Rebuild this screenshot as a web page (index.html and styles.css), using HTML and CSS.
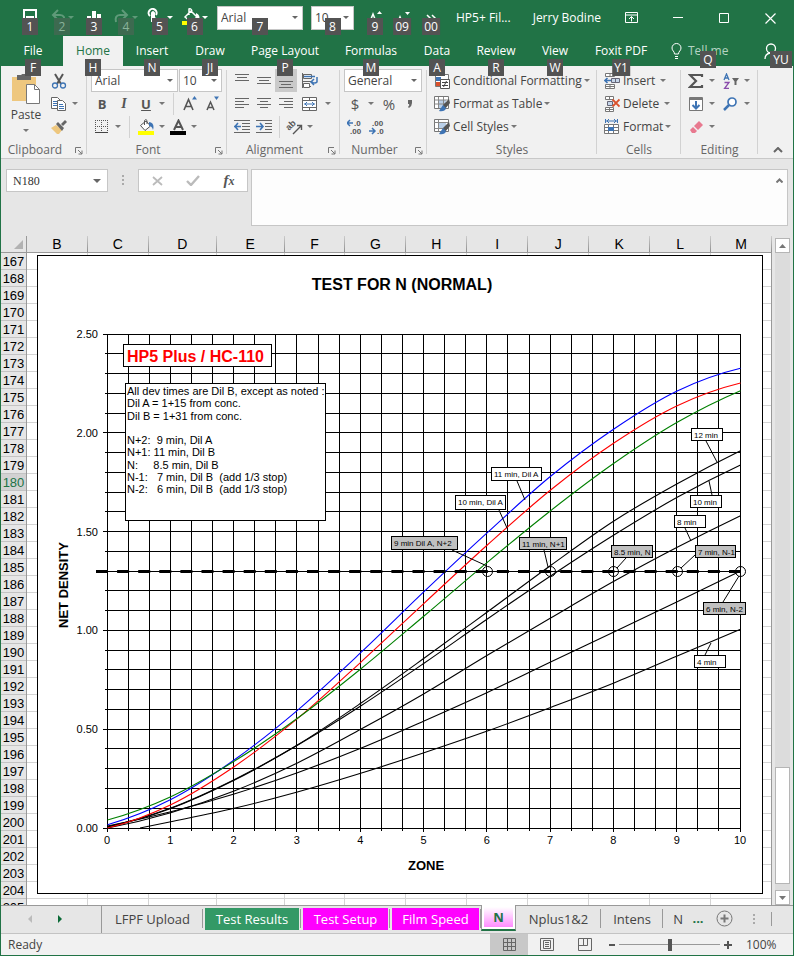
FILE: index.html
```html
<!DOCTYPE html>
<html lang="en">
<head>
<meta charset="utf-8">
<meta name="viewport" content="width=device-width, initial-scale=1">
<title>HP5+ Film test</title>
<link rel="stylesheet" href="styles.css">
</head>
<body>
<div class="window">
  <header class="titlebar">
    <div class="qat">
      <button class="qa" aria-label="Save"><svg width="16" height="16"><path d="M2 1h12v14H2zM4 8h8" fill="none" stroke="#fff" stroke-width="2"/></svg><span class="tip">1</span></button>
      <button class="qa dim" aria-label="Undo"><svg width="24" height="16"><path d="M8 1 3 6l5 5M3 6h7c4 0 5 3 4 7" fill="none" stroke="#5f9a79" stroke-width="2"/><path d="M18 7h6l-3 3z" fill="#5f9a79"/></svg><span class="tip">2</span></button>
      <button class="qa" aria-label="Chart"><svg width="16" height="16"><path d="M1 7h4v9H1zM6 2h4v14H6zM11 5h4v11h-4z" fill="#fff"/></svg><span class="tip">3</span></button>
      <button class="qa dim" aria-label="Redo"><svg width="24" height="16"><path d="M8 1l5 5-5 5M13 6H6c-4 0-5 3-4 7" fill="none" stroke="#5f9a79" stroke-width="2"/><path d="M18 7h6l-3 3z" fill="#5f9a79"/></svg><span class="tip">4</span></button>
      <button class="qa wide" aria-label="Touch mode"><svg width="26" height="18"><path d="M3 8A4 4 0 1 1 9 7M5 14V5q1-2 2 0v5l4 2v5" fill="none" stroke="#fff" stroke-width="2"/><path d="M20 8h6l-3 3z" fill="#fff"/></svg><span class="tip">5</span></button>
      <button class="qa wide" aria-label="Fill color"><svg width="26" height="18"><path d="M3 9 9 3l6 6-6 5zM7 7V1q2-1 3 2" fill="none" stroke="#fff" stroke-width="1.500"/><path d="M14 5q5 2 3 8-2-2-3-3z" fill="#fff"/><path d="M0 13h15v4H0z" fill="#ff0"/><path d="M20 8h6l-3 3z" fill="#fff"/></svg><span class="tip">6</span></button>
      <span class="combo qfont"><select aria-label="Quick font"><option>Arial</option></select><span class="tip">7</span></span>
      <span class="combo qsize"><select aria-label="Quick font size"><option>10</option></select><span class="tip">8</span></span>
      <button class="qa" aria-label="Increase font"><svg width="18" height="16"><path d="M3 15 7 5l4 10M5 12h5" fill="none" stroke="#fff" stroke-width="1.500"/><path d="M11 5h5l-2.500-3z" fill="#fff"/></svg><span class="tip">9</span></button>
      <button class="qa slim" aria-label="Decrease font"><svg width="18" height="16"><path d="M4 15 7 8l3 7" fill="none" stroke="#fff" stroke-width="1.500"/><path d="M12 3h5l-2.500 3z" fill="#fff"/></svg><span class="tip">09</span></button>
      <button class="qa last" aria-label="More commands"><svg width="12" height="12"><path d="M2 4l3 3-3 3M7 4l3 3-3 3" fill="none" stroke="#fff" stroke-width="1.500"/></svg><span class="tip">00</span></button>
    </div>
    <span class="doc">HP5+ Fil...</span>
    <span class="user">Jerry Bodine</span>
    <button class="wbtn" aria-label="Ribbon display options"><svg width="14" height="12"><path d="M.5.500h12v10H.500zM.500 3h12M6.500 9.500V4.500M4 7l2.500-2.500L9 7" fill="none" stroke="#fff"/></svg></button>
    <button class="wbtn" aria-label="Minimize"><svg width="12" height="12"><path d="M1 5.500h10" stroke="#fff"/></svg></button>
    <button class="wbtn" aria-label="Maximize"><svg width="11" height="11"><path d="M.5.500h9v9h-9z" fill="none" stroke="#fff"/></svg></button>
    <button class="wbtn" aria-label="Close"><svg width="11" height="11"><path d="M.5.500l10 10M10.500.500l-10 10" stroke="#fff" stroke-width="1.200"/></svg></button>
  </header>

  <nav class="tabs">
    <a href="#" class="t60">File<span class="tip">F</span></a>
    <a href="#" class="t60 on">Home<span class="tip">H</span></a>
    <a href="#" class="t58">Insert<span class="tip">N</span></a>
    <a href="#" class="t58">Draw<span class="tip">JI</span></a>
    <a href="#" class="t92">Page Layout<span class="tip">P</span></a>
    <a href="#" class="t80">Formulas<span class="tip">M</span></a>
    <a href="#" class="t52">Data<span class="tip">A</span></a>
    <a href="#" class="t66">Review<span class="tip">R</span></a>
    <a href="#" class="t52">View<span class="tip">W</span></a>
    <a href="#" class="t80">Foxit PDF<span class="tip">Y1</span></a>
    <a href="#" class="tell"><svg width="11" height="16"><path d="M3.500 11C3.500 8 1 8 1 5a4.500 4.500 0 0 1 9 0c0 3-2.500 3-2.500 6zM4 13.500h3M4 15.500h3" fill="none" stroke="#fff"/></svg><span>Tell me</span><span class="tip">Q</span></a>
    <a href="#" class="share" aria-label="Account"><svg width="15" height="16"><circle cx="8" cy="5.500" r="4.500" fill="none" stroke="#fff" stroke-width="1.300"/><path d="M2 16q0-5 5-6" fill="none" stroke="#fff" stroke-width="1.300"/></svg><span class="tip">YU</span></a>
  </nav>

  <section class="ribbon">
    <div class="group g86">
      <div class="body clip">
        <button class="paste"><svg width="30" height="30"><path d="M1 3h24v24H1z" fill="#eec77e"/><path d="M6 1h4q3-3 6 0h4v5H6z" fill="#666"/><path d="M15.500 10.500h8l5 5v14h-13z" fill="#fff" stroke="#777"/><path d="M23.500 10.500v5h5" fill="none" stroke="#777"/></svg><span>Paste</span><i class="caret"></i></button>
        <div>
          <div class="row"><button class="tool" aria-label="Cut"><svg width="16" height="16"><path d="M4 1l6 10M12 1 6 11" stroke="#555" stroke-width="2"/><circle cx="4" cy="12.500" r="2.500" fill="none" stroke="#3e74b4" stroke-width="1.300"/><circle cx="12" cy="12.500" r="2.500" fill="none" stroke="#3e74b4" stroke-width="1.300"/></svg></button></div>
          <div class="row"><button class="tool" aria-label="Copy"><svg width="16" height="16"><path d="M.5 1.500h6l3 3v8h-9z" fill="#fff" stroke="#666"/><path d="M2 5.500h4M2 7.500h4M2 9.500h4" stroke="#3e74b4"/><path d="M6.500 4.500h5l3 3v7h-8z" fill="#fff" stroke="#666"/><path d="M8 8.500h4M8 10.500h5M8 12.500h5" stroke="#3e74b4"/></svg></button><button class="drop" aria-label="Copy options"><i class="caret"></i></button></div>
          <div class="row"><button class="tool" aria-label="Format painter"><svg width="16" height="16"><path d="M0 9l5-3 6 5-3 4H6z" fill="#eec77e"/><path d="M5 5l2-2 6 6-2 3zM10 5l4-4 2 2-4 4z" fill="#666"/></svg></button></div>
        </div>
      </div>
      <div class="cap l">Clipboard<svg class="launch" width="8" height="8"><path d="M.5 6V.500H6M3 3l4 4M7 3.500V7H3.500" fill="none" stroke="#777"/></svg></div>
    </div>

    <div class="group g140">
      <div class="body pad">
        <div class="row gap1"><span class="combo rfont"><select aria-label="Font"><option>Arial</option></select></span><span class="combo rsize"><select aria-label="Font size"><option>10</option></select></span></div>
        <div class="row"><button class="tool"><b>B</b></button><button class="tool"><em>I</em></button><button class="tool"><u>U</u></button><button class="drop" aria-label="Underline options"><i class="caret"></i></button><i class="bar"></i><button class="tool" aria-label="Grow font"><svg width="16" height="16"><path d="M2 14 6.500 3.500 11 14M3.500 10.500h6" fill="none" stroke="#555" stroke-width="1.600"/><path d="M10 3.500h5L12.500 0z" fill="#3e74b4"/></svg></button><button class="tool" aria-label="Shrink font"><svg width="16" height="16"><path d="M3 14l3.500-8L10 14M4 11.500h5" fill="none" stroke="#555" stroke-width="1.500"/><path d="M10 .500h5L12.500 4z" fill="#3e74b4"/></svg></button></div>
        <div class="row"><button class="tool" aria-label="Borders"><svg width="14" height="14"><path d="M.5 0v12M6.500 0v12M12.500 0v12M0 .500h13M0 6.500h13" stroke="#555" stroke-dasharray="1 1"/><path d="M0 12.500h13" stroke="#444"/></svg></button><button class="drop" aria-label="Border options"><i class="caret"></i></button><i class="bar"></i><button class="tool" aria-label="Fill color"><svg width="16" height="16"><path d="M2.500 6.500 8 2l4.500 5L7 11.500zM6.500 6V1.500q1.500-2 2.500 0V5" fill="#fff" stroke="#555"/><path d="M11 3q6 1 4 8-1-4-4-4z" fill="#3e74b4"/><path d="M0 12h16v4H0z" fill="#ff0"/></svg></button><button class="drop" aria-label="Fill options"><i class="caret"></i></button><button class="tool" aria-label="Font color"><svg width="16" height="16"><path d="M4 11 8.500 1.500 13 11M5.500 8h6" fill="none" stroke="#555" stroke-width="2"/><path d="M0 12h16v4H0z"/></svg></button><button class="drop" aria-label="Font color options"><i class="caret"></i></button></div>
      </div>
      <div class="cap l">Font<svg class="launch" width="8" height="8"><path d="M.5 6V.500H6M3 3l4 4M7 3.500V7H3.500" fill="none" stroke="#777"/></svg></div>
    </div>

    <div class="group g113">
      <div class="body pad">
        <div class="row"><button class="tool" aria-label="Top align"><svg width="14" height="16"><path d="M0 1.500h14M2 4.500h10M0 7.500h14" stroke="#666"/></svg></button><button class="tool" aria-label="Middle align"><svg width="14" height="16"><path d="M0 4.500h14M2 7.500h10M0 10.500h14" stroke="#666"/></svg></button><button class="tool sel" aria-label="Bottom align"><svg width="14" height="16"><path d="M0 8.500h14M2 11.500h10M0 14.500h14" stroke="#666"/></svg></button><button class="tool big" aria-label="Wrap text"><svg width="16" height="16"><path d="M.5 0v15M0 1.500h9M0 8.500h9M0 13.500h9" stroke="#666"/><path d="M1.500 1.500h8v4h-8zM1.500 10.500h6v4h-6z" fill="#fff" stroke="#666"/><path d="M2 3.500h11M15 4v5q-2 2-5 0M12 6 9 9l3 3" fill="none" stroke="#3e74b4" stroke-width="1.500"/></svg></button></div>
        <div class="row"><button class="tool" aria-label="Align left"><svg width="14" height="12"><path d="M0 .500h14M0 3.500h9M0 6.500h14M0 9.500h9" stroke="#666"/></svg></button><button class="tool" aria-label="Center"><svg width="14" height="12"><path d="M0 .500h14M3 3.500h8M0 6.500h14M3 9.500h8" stroke="#666"/></svg></button><button class="tool" aria-label="Align right"><svg width="14" height="12"><path d="M0 .500h14M5 3.500h9M0 6.500h14M5 9.500h9" stroke="#666"/></svg></button><button class="tool big" aria-label="Merge"><svg width="16" height="16"><path d="M.5 1.500h14v13H.500zM.500 4.500h14M.500 11.500h14M7.500 1v3M7.500 12v3" fill="#fff" stroke="#666"/><path d="M2 8h11M5 6 3 8l2 2M10 6l2 2-2 2" fill="none" stroke="#3e74b4"/></svg></button><button class="drop" aria-label="Merge options"><i class="caret"></i></button></div>
        <div class="row"><button class="tool" aria-label="Decrease indent"><svg width="16" height="14"><path d="M0 .500h16M8 3.500h8M8 6.500h8M8 9.500h8M0 12.500h16" stroke="#666"/><path d="M0 6.500h7M4 3 1 6.500 4 10" fill="none" stroke="#3e74b4" stroke-width="1.600"/></svg></button><button class="tool" aria-label="Increase indent"><svg width="16" height="14"><path d="M0 .500h16M9 3.500h7M9 6.500h7M9 9.500h7M0 12.500h16" stroke="#666"/><path d="M0 6.500h7M4 3l3 3.500L4 10" fill="none" stroke="#3e74b4" stroke-width="1.600"/></svg></button><i class="bar thin"></i><button class="tool" aria-label="Orientation"><svg width="18" height="16"><text x="0" y="0" transform="translate(4 12) rotate(-45)" class="ab">ab</text><path d="M8 15 16 7M12 6.500h4.500V11" fill="none" stroke="#555" stroke-width="1.400"/></svg></button><button class="drop" aria-label="Orientation options"><i class="caret"></i></button></div>
      </div>
      <div class="cap l">Alignment<svg class="launch" width="8" height="8"><path d="M.5 6V.500H6M3 3l4 4M7 3.500V7H3.500" fill="none" stroke="#777"/></svg></div>
    </div>

    <div class="group g87">
      <div class="body pad">
        <div class="row"><span class="combo rnum"><select aria-label="Number format"><option>General</option></select></span></div>
        <div class="row"><button class="tool sym">$</button><button class="drop" aria-label="Currency options"><i class="caret"></i></button><button class="tool big sym">%</button><button class="tool comma" aria-label="Comma style"><svg width="6" height="10"><path d="M1 1h4v3q0 3-3 5l-1-1q2-2 1-3H1z" fill="#666"/></svg></button></div>
        <div class="row"><button class="tool" aria-label="Increase decimal"><svg width="16" height="16"><text x="7" y="7" class="dec">.0</text><text x="3" y="15" class="dec">.00</text><path d="M0 4h6M3 1 0 4l3 3" fill="none" stroke="#3e74b4" stroke-width="1.500"/></svg></button><button class="tool" aria-label="Decrease decimal"><svg width="16" height="16"><text x="3" y="7" class="dec">.00</text><text x="8" y="15" class="dec">.0</text><path d="M0 12h6M3 9l3 3-3 3" fill="none" stroke="#3e74b4" stroke-width="1.500"/></svg></button></div>
      </div>
      <div class="cap l">Number<svg class="launch" width="8" height="8"><path d="M.5 6V.500H6M3 3l4 4M7 3.500V7H3.500" fill="none" stroke="#777"/></svg></div>
    </div>

    <div class="group g170">
      <div class="body pad">
        <div class="row"><button class="line"><span class="ic"><svg width="16" height="16"><path d="M1.500 1.500h13v12h-13z" fill="#fff" stroke="#777"/><path d="M2 4h5v4H2z" fill="#3e74b4"/><path d="M2 9h5v4H2z" fill="#d9512c"/><path d="M6.500 6.500h9v9h-9z" fill="#fff" stroke="#555"/><path d="M8 9.500h6M8 12.500h6M12.500 8l-3 6" stroke="#444"/></svg></span>Conditional Formatting<i class="caret"></i></button></div>
        <div class="row"><button class="line"><span class="ic"><svg width="16" height="16"><path d="M.5.500h14v12H.500z" fill="#fff" stroke="#777"/><path d="M4 4h8v8H4z" fill="#b9cfe8"/><path d="M.5 4h14M.500 8h14M4.500 1v11M9.500 1v11" stroke="#888"/><path d="M9 9l6-6 1 4-5 6z" fill="#555"/><path d="M5 15l4-6 3 3q-1 4-7 3z" fill="#3e74b4"/></svg></span>Format as Table<i class="caret"></i></button></div>
        <div class="row"><button class="line"><span class="ic"><svg width="16" height="16"><path d="M.5.500h14v12H.500z" fill="#fff" stroke="#777"/><path d="M4 4h8v5H4z" fill="#b9cfe8"/><path d="M.5 3.500h14M4.500 1v11M.500 9.500h14" stroke="#888"/><path d="M9 9l6-6 1 4-5 6z" fill="#555"/><path d="M5 15l4-6 3 3q-1 4-7 3z" fill="#3e74b4"/></svg></span>Cell Styles<i class="caret"></i></button></div>
      </div>
      <div class="cap">Styles</div>
    </div>

    <div class="group g84">
      <div class="body pad">
        <div class="row"><button class="line"><span class="ic"><svg width="16" height="16"><path d="M1.500.500h9v3h-9zM1.500 11.500h9v4h-9zM6 .500v3M6 12v3M1.500 13.500h9" fill="#fff" stroke="#777"/><path d="M7.500 5.500h8v4h-8zM11.500 6v3" fill="#c6d6ea" stroke="#667"/><path d="M1 7.500h6M3.500 5 1 7.500 3.500 10" fill="none" stroke="#3e74b4" stroke-width="1.600"/></svg></span>Insert</button><button class="drop split" aria-label="Insert options"><i class="caret"></i></button></div>
        <div class="row"><button class="line"><span class="ic"><svg width="16" height="16"><path d="M1.500.500h8v3h-8zM1.500 11.500h8v4h-8zM5.500 .500v3M5.500 12v3M1.500 13.500h8" fill="#fff" stroke="#777"/><path d="M3.500 5.500h5v4h-5z" fill="#c6d6ea" stroke="#667"/><path d="M8.500 3.500l7 7M15.500 3.500l-7 7" stroke="#d9512c" stroke-width="1.800"/></svg></span>Delete</button><button class="drop split" aria-label="Delete options"><i class="caret"></i></button></div>
        <div class="row"><button class="line"><span class="ic"><svg width="16" height="16"><path d="M1.500 0v4M13.500 0v4M2 2h11M5 0 3 2l2 2M10 0l2 2-2 2" fill="none" stroke="#3e74b4"/><path d="M.5 5.500h14v9H.500zM.500 8.500h14M.500 11.500h14M4.500 5v9M9.500 5v9" fill="#fff" stroke="#777"/><path d="M4 8h6v4H4z" fill="#3e74b4"/></svg></span>Format<i class="caret"></i></button></div>
      </div>
      <div class="cap">Cells</div>
    </div>

    <div class="group g77">
      <div class="body pad">
        <div class="row"><button class="tool" aria-label="AutoSum"><svg width="16" height="16"><path d="M14 4V2H2l6 6-6 6h12v-2" fill="none" stroke="#555" stroke-width="2.200"/></svg></button><button class="drop" aria-label="AutoSum options"><i class="caret"></i></button><button class="tool split" aria-label="Sort and filter"><svg width="17" height="16"><path d="M1 7l2.500-6L6 7M2 5h3" fill="none" stroke="#3e74b4" stroke-width="1.300"/><path d="M1.500 9.500H6l-4.500 6H6" fill="none" stroke="#8a4bab" stroke-width="1.300"/><path d="M9 5h7l-2.500 3.500V12h-2V8.500z" fill="#666"/></svg></button><button class="drop" aria-label="Sort options"><i class="caret"></i></button></div>
        <div class="row"><button class="tool" aria-label="Fill"><svg width="14" height="16"><path d="M.5 1.500h13v13H.500z" fill="#fff" stroke="#777"/><path d="M1 1h12v3H1z" fill="#777"/><path d="M7 5v7M3.500 9 7 12.500 10.500 9" fill="none" stroke="#3e74b4" stroke-width="2"/></svg></button><button class="drop" aria-label="Fill options"><i class="caret"></i></button><button class="tool split" aria-label="Find and select"><svg width="16" height="14"><circle cx="9" cy="5" r="4" fill="#fff" stroke="#3e74b4" stroke-width="1.700"/><path d="M6 8l-5 5" stroke="#3e74b4" stroke-width="2.500"/></svg></button><button class="drop" aria-label="Find options"><i class="caret"></i></button></div>
        <div class="row"><button class="tool" aria-label="Clear"><svg width="14" height="14"><path d="M5 6l5-5 4 4-5 5z" fill="#e8798f"/><path d="M1 10l3-3 4 4-2 2H3z" fill="#e8798f"/></svg></button><button class="drop" aria-label="Clear options"><i class="caret"></i></button></div>
      </div>
      <div class="cap">Editing</div>
    </div>
    <button class="collapse" aria-label="Collapse ribbon"><svg width="10" height="6"><path d="M1 5l4-4 4 4" fill="none" stroke="#666" stroke-width="2"/></svg></button>
  </section>

  <section class="formula">
    <span class="combo name"><select aria-label="Name box"><option>N180</option></select></span>
    <svg class="grip" width="2" height="10"><path d="M0 0h2v2H0zM0 4h2v2H0zM0 8h2v2H0z" fill="#aaa"/></svg>
    <div class="fx">
      <button aria-label="Cancel"><svg width="11" height="10"><path d="M1 1l9 8M10 1 1 9" stroke="#bbb" stroke-width="1.800"/></svg></button>
      <button aria-label="Enter"><svg width="14" height="11"><path d="M1 6l4 4 8-9" fill="none" stroke="#bbb" stroke-width="2.400"/></svg></button>
      <button aria-label="Insert function"><span class="f">f<small>x</small></span></button>
    </div>
    <div class="entry"><textarea aria-label="Formula"></textarea><svg width="7" height="5"><path d="M.500 4.500l3-3 3 3" fill="none" stroke="#777" stroke-width="2"/></svg></div>
  </section>

  <main class="sheet">
    <div class="corner"><svg width="9" height="9"><path d="M9 0v9H0z" fill="#b2b2b2"/></svg></div>
    <div class="cols"><span>B</span><span>C</span><span class="w68">D</span><span class="w68">E</span><span>F</span><span>G</span><span>H</span><span>I</span><span>J</span><span>K</span><span>L</span><span>M</span></div>
    <div class="rowheads" id="rowheads"></div>
    <div class="cells">
      <div class="lines"><i></i><i></i><i class="w68"></i><i class="w68"></i><i></i><i></i><i></i><i></i><i></i><i></i><i></i><i></i></div>
      <svg class="chart" viewBox="37 255 726 639" role="img" aria-label="Test for N (Normal)">
        <rect x="37.500" y="255.500" width="725" height="638" fill="#fff" stroke="#000"/>
        <text x="402" y="290" class="title">TEST FOR N (NORMAL)</text>
        <g id="plot"></g>
        <text x="426" y="870" class="axis">ZONE</text>
        <text x="0" y="0" transform="translate(68 585) rotate(-90)" class="axis">NET DENSITY</text>
        <rect x="123.500" y="344.500" width="148" height="22" fill="#fff" stroke="#000"/>
        <text x="127" y="362" class="film">HP5 Plus / HC-110</text>
        <rect x="125.500" y="383.500" width="200" height="137" fill="#fff" stroke="#000"/>
        <g class="notes">
          <text x="127" y="395">All dev times are Dil B, except as noted :</text>
          <text x="127" y="407">Dil A = 1+15 from conc.</text>
          <text x="127" y="420">Dil B = 1+31 from conc.</text>
          <text x="127" y="444">N+2:  9 min, Dil A</text>
          <text x="127" y="456">N+1: 11 min, Dil B</text>
          <text x="127" y="469">N:     8.5 min, Dil B</text>
          <text x="127" y="481">N-1:   7 min, Dil B  (add 1/3 stop)</text>
          <text x="127" y="493">N-2:   6 min, Dil B  (add 1/3 stop)</text>
        </g>
      </svg>
    </div>
    <div class="scroll">
      <button aria-label="Scroll up"><svg width="7" height="4"><path d="M0 4h7L3.500 0z" fill="#777"/></svg></button>
      <div class="track"><div class="thumb"></div></div>
      <button aria-label="Scroll down"><svg width="7" height="4"><path d="M0 0h7L3.500 4z" fill="#777"/></svg></button>
    </div>
  </main>

  <nav class="sheets">
    <div class="nav"><button aria-label="Previous sheet"><svg width="5" height="8"><path d="M5 0v8L1 4z" fill="#bbb"/></svg></button><button aria-label="Next sheet"><svg width="5" height="8"><path d="M0 0v8l4-4z" fill="#0b6a37"/></svg></button></div>
    <a href="#" class="s101">LFPF Upload</a>
    <a href="#" class="s98 fill green"><span>Test Results</span></a>
    <a href="#" class="s89 fill pink"><span>Test Setup</span></a>
    <a href="#" class="s91 fill pink"><span>Film Speed</span></a>
    <a href="#" class="current"><span>N</span></a>
    <a href="#" class="s85">Nplus1&amp;2</a>
    <a href="#" class="s62">Intens</a>
    <a href="#" class="cut">N</a>
    <span class="dots">...</span>
    <button class="add" aria-label="New sheet"><svg width="17" height="17"><circle cx="8.500" cy="8.500" r="7.500" fill="none" stroke="#777"/><path d="M4.500 8.500h8M8.500 4.500v8" stroke="#777" stroke-width="2"/></svg></button>
    <span class="tail"><svg width="2" height="10"><path d="M0 0h2v2H0zM0 4h2v2H0zM0 8h2v2H0z" fill="#aaa"/></svg><i></i></span>
  </nav>

  <footer class="status">
    <span class="ready">Ready</span>
    <button class="view on" aria-label="Normal view"><svg width="13" height="13"><path d="M.5.500h12v12H.500zM.500 4.500h12M.500 8.500h12M4.500.500v12M8.500.500v12" fill="none" stroke="#666"/></svg></button>
    <button class="view" aria-label="Page layout view"><svg width="14" height="13"><path d="M.5.500h13v12H.500zM3.500 2.500h7v8h-7zM5 4.500h4M5 6.500h4M5 8.500h4" fill="none" stroke="#666"/></svg></button>
    <button class="view" aria-label="Page break view"><svg width="14" height="13"><path d="M.5.500h13v12H.500zM.500 7.500h9v-7M5.500 7V.500" fill="none" stroke="#666"/></svg></button>
    <button class="zb" aria-label="Zoom out"><svg width="8" height="8"><path d="M1 4h6" stroke="#555" stroke-width="2"/></svg></button>
    <input type="range" aria-label="Zoom" min="0" max="200" value="100">
    <button class="zb" aria-label="Zoom in"><svg width="8" height="8"><path d="M0 4h8M4 0v8" stroke="#555" stroke-width="2"/></svg></button>
    <span class="pct">100%</span>
  </footer>
</div>
<script src="chart.js"></script>
</body>
</html>
```
FILE: styles.css
```css
* { box-sizing: border-box; }
body { margin: 0; font: 12px/16px "Open Sans", "Noto Sans", sans-serif; color: #444; }
button { border: 0; background: none; padding: 0; margin: 0; font: inherit; color: inherit; display: flex; align-items: center; justify-content: center; }
a { color: inherit; text-decoration: none; }
svg { display: block; flex: none; }
select, textarea { font: inherit; color: inherit; border: 0; background: none; margin: 0; padding: 0; appearance: none; outline: 0; }
.window { min-height: 100vh; display: flex; flex-direction: column; border: 1px solid #217346; border-top: 0; background: #e6e6e6; }

.tip { position: absolute; left: 50%; transform: translateX(-50%); min-width: 16px; height: 17px; padding: 0 2px; background: #535353; color: #fff; text-align: center; line-height: 17px; z-index: 2; }
.caret { width: 0; height: 0; border: 3px solid transparent; border-top-color: #777; border-bottom: 0; flex: none; }
.combo { position: relative; display: flex; background: #fff; border: 1px solid #c6c6c6; height: 23px; }
.combo select { flex: 1; min-width: 0; padding-left: 3px; }
.combo::after { content: ""; position: absolute; right: 4px; top: 9px; border: 3px solid transparent; border-top-color: #666; border-bottom: 0; pointer-events: none; }

.titlebar { display: flex; align-items: center; height: 36px; background: #217346; color: #fff; }
.qat { display: flex; align-items: center; padding-left: 13px; height: 36px; }
.qa { position: relative; width: 32px; height: 36px; padding-bottom: 2px; }
.qa.wide { width: 35px; }
.qa.slim { width: 22px; }
.qa.last { width: 36px; }
.qa .tip { top: 18px; }
.qa.dim .tip { background: #3d6a50; color: #8ab39b; }
.qfont { width: 86px; height: 24px; color: #444; margin: 0 8px 0 5px; }
.qsize { width: 43px; height: 24px; color: #444; margin-right: 5px; }
.titlebar .combo .tip { top: 11px; }
.doc { flex: 1; padding-left: 7px; white-space: nowrap; }
.user { padding-right: 8px; white-space: nowrap; }
.wbtn { width: 46px; height: 32px; flex: none; }

.tabs { display: flex; height: 30px; background: #217346; color: #fff; padding-left: 2px; }
.tabs a { position: relative; display: flex; align-items: center; justify-content: center; white-space: nowrap; flex: none; }
.tabs a .tip { top: 23px; }
.tabs .on { background: #f1f1f1; color: #217346; }
.t60 { width: 60px; } .t58 { width: 58px; } .t92 { width: 92px; }
.t80 { width: 80px; } .t52 { width: 52px; } .t66 { width: 66px; }
.tabs .tell { gap: 6px; padding-left: 10px; color: #b5d3c2; }
.tabs .tell .tip, .tabs .share .tip { top: 15px; }
.tabs .tell .tip { left: 47px; color: #fff; }
.tabs .share { width: 46px; margin-left: auto; }
.tabs .share .tip { left: 34px; width: 22px; }

.ribbon { display: flex; height: 93px; background: #f1f1f1; border-bottom: 1px solid #c8c8c8; }
.group { display: flex; flex-direction: column; padding-top: 3px; position: relative; flex: none; }
.group::after { content: ""; position: absolute; right: 0; top: 4px; bottom: 4px; width: 1px; background: #d2d2d2; }
.g86 { width: 86px; } .g140 { width: 140px; } .g113 { width: 113px; } .g87 { width: 87px; }
.g170 { width: 170px; } .g84 { width: 84px; } .g77 { width: 77px; }
.body { height: 73px; }
.pad { padding-left: 4px; }
.clip { display: flex; padding-left: 3px; }
.paste { flex-direction: column; width: 44px; height: 69px; padding-top: 5px; justify-content: flex-start; gap: 3px; }
.paste .caret { margin-top: 3px; }
.row { display: flex; align-items: center; height: 23px; }
.gap1 { gap: 1px; }
.rfont { width: 87px; } .rsize { width: 43px; } .rnum { width: 78px; }
.tool { width: 22px; height: 23px; flex: none; }
.tool.big { width: 26px; }
.tool.comma { width: 16px; }
.tool b, .tool u { font-weight: 700; font-size: 13px; color: #555; }
.tool em { font: italic 700 14px/16px "Liberation Serif", serif; color: #555; }
.tool.sym { font-size: 15px; color: #555; }
.tool.sel { background: #cacaca; }
.drop { width: 10px; height: 23px; flex: none; }
.bar { width: 12px; height: 22px; flex: none; background: linear-gradient(#d2d2d2, #d2d2d2) center / 1px 100% no-repeat; }
.bar.thin { width: 8px; }
.split { margin-left: 3px; }
.line { white-space: nowrap; }
.line .caret { margin-left: 2px; }
.ic { width: 22px; display: flex; justify-content: center; }
.ab { font: 700 9px "Liberation Sans", sans-serif; fill: #555; }
.dec { font: 700 8px "Liberation Sans", sans-serif; fill: #555; }
.cap { position: relative; text-align: center; height: 16px; color: #666; }
.cap.l { padding-right: 18px; }
.launch { position: absolute; right: 4px; top: 5px; }
.collapse { margin-left: auto; width: 30px; height: 16px; align-self: flex-end; }

.formula { display: flex; height: 77px; padding: 10px 5px 9px; align-items: flex-start; }
.name { width: 102px; font: 12px/16px "Liberation Serif", serif; color: #333; }
.name select { padding-left: 6px; }
.combo.name::after { right: 6px; border-width: 4px 4px 0; }
.grip { margin: 6px 14px 0; }
.fx { display: flex; width: 110px; height: 23px; background: #fff; border: 1px solid #c6c6c6; margin-right: 3px; flex: none; }
.fx button { flex: 1; }
.f { font: italic 700 15px/16px "Liberation Serif", serif; color: #555; }
.f small { font-size: 12px; }
.entry { flex: 1; display: flex; height: 57px; background: #fdfdfd; border: 1px solid #c6c6c6; padding: 8px 4px; }
.entry textarea { flex: 1; resize: none; }

.sheet { flex: 1 0 669px; display: grid; grid-template: 17px 1fr / 26px 1fr 21px; font: 13px/17px "Liberation Sans", sans-serif; color: #000; min-height: 0; }
.corner { border-right: 1px solid #999; border-bottom: 1px solid #999; display: flex; justify-content: flex-end; align-items: flex-end; padding: 0 3px 3px 0; }
.cols, .lines { display: flex; }
.cols { border-bottom: 1px solid #999; }
.cols span, .lines i { flex: 61 1 0; text-align: center; }
.cols span { font-size: 14px; line-height: 16px; border-right: 1px solid; border-image: linear-gradient(#d0d0d0, #8a8a8a) 1; }
.cols .w68, .lines .w68 { flex-grow: 68; }
.rowheads { border-right: 1px solid #999; overflow: hidden; height: 652px; }
.rowheads div { height: 17px; border-bottom: 1px solid #c3c3c3; text-align: center; }
.rowheads .here { background: #d2d2d2; color: #217346; }
.cells { position: relative; overflow: hidden; border-right: 1px solid #999; background: repeating-linear-gradient(#fff 0 16px, #d4d4d4 16px 17px); }
.lines { height: 100%; }
.lines i { border-right: 1px solid #d4d4d4; }
.lines i:last-child { border: 0; }
.chart { position: absolute; left: 10px; top: 2px; width: calc(100% - 18px); }
.scroll { display: flex; flex-direction: column; grid-column: 3; grid-row: 1 / 3; padding: 2px 3px 0; }
.scroll button { height: 15px; border: 1px solid #b5b5b5; background: #fff; }
.track { flex: 1; background: #dcdcdc; display: flex; flex-direction: column; justify-content: flex-end; padding-bottom: 6px; }
.thumb { height: 117px; background: #fff; border: 1px solid #b5b5b5; }

.title, .axis, .film { font-family: "Liberation Sans", sans-serif; font-weight: 700; }
.title { font-size: 16px; text-anchor: middle; }
.axis { font-size: 13px; text-anchor: middle; }
.film { font-size: 16px; fill: #f00; }
.notes, .scale { font: 11px "Liberation Sans", sans-serif; }
.notes text { white-space: pre; }
.callout { font: 8px "Liberation Sans", sans-serif; }

.sheets { display: flex; height: 29px; border-top: 1px solid #999; border-bottom: 1px solid #c3c3c3; font-size: 13px; }
.sheets a { position: relative; display: flex; align-items: center; justify-content: center; white-space: nowrap; flex: none; padding-bottom: 2px; }
.sheets a::after { content: ""; position: absolute; right: 0; top: 3px; bottom: 5px; width: 1px; background: #999; }
.nav { width: 101px; display: flex; align-items: center; padding: 0 38px 2px 26px; justify-content: space-between; border-right: 1px solid #999; }
.s101 { width: 101px; } .s98 { width: 98px; } .s89 { width: 89px; } .s91 { width: 91px; } .s85 { width: 85px; } .s62 { width: 62px; }
.sheets .fill { padding: 2px 2px 3px; color: #fff; align-items: stretch; }
.sheets .fill span { flex: 1; display: flex; align-items: center; justify-content: center; }
.green span { background: #396; }
.pink span { background: #f0f; }
.sheets .current { width: 35px; margin-top: -1px; height: 26px; background: #fff; border: 1px solid #999; border-top: 0; border-bottom: 2px solid #217346; padding: 2px; align-items: stretch; color: #217346; font-weight: 700; }
.current span { flex: 1; display: flex; align-items: center; justify-content: center; background: linear-gradient(#fff, #ff8cff); }
.sheets .current::after, .sheets .cut::after { display: none; }
.sheets .cut { width: 20px; justify-content: flex-end; overflow: hidden; }
.dots { width: 30px; text-align: center; color: #217346; font-weight: 700; line-height: 24px; }
.add { width: 22px; padding-bottom: 2px; }
.tail { margin-left: auto; display: flex; gap: 16px; align-items: center; padding: 0 21px 2px 0; }
.tail i { width: 1px; height: 14px; background: #999; }

.status { display: flex; align-items: center; height: 21px; background: #f1f1f1; }
.ready { flex: 1; padding-left: 7px; }
.view { width: 38px; height: 21px; }
.view.on { background: #c8c8c8; }
.zb { width: 15px; height: 21px; }
.status input { appearance: none; width: 101px; height: 12px; margin: 0; background: linear-gradient(#999, #999) center / 100% 1px no-repeat; }
.status input::-webkit-slider-thumb { appearance: none; width: 4px; height: 12px; background: #555; }
.pct { width: 58px; padding-left: 11px; }
```
FILE: chart.js
```js
const heads = document.getElementById("rowheads");
for (let r = 167; r <= 205; r++) {
  const d = document.createElement("div");
  d.textContent = r;
  if (r === 180) d.className = "here";
  heads.append(d);
}

const X0 = 107, X1 = 740, Y0 = 828, Y1 = 334;
const plot = document.getElementById("plot");

function add(tag, attrs, text) {
  const el = document.createElementNS("http://www.w3.org/2000/svg", tag);
  for (const k in attrs) el.setAttribute(k, attrs[k]);
  if (text) el.textContent = text;
  plot.append(el);
}

// Grid lines and tick marks
let grid = "";
for (let i = 0; i <= 30; i++) {
  const x = Math.floor(X0 + (X1 - X0) * i / 30) + 0.5;
  grid += `M${x} ${Y1}V${Y0 + (i % 3 ? 3 : 4)}`;
}
for (let i = 0; i <= 25; i++) {
  const y = Math.floor(Y1 + (Y0 - Y1) * i / 25) + 0.5;
  grid += `M${i % 5 ? 105 : 103} ${y}H${X1 + 1}`;
}
add("path", { d: grid, stroke: "#000", "shape-rendering": "crispEdges" });

for (let z = 0; z <= 10; z++)
  add("text", { x: X0 + 63.3 * z, y: 844, class: "scale", "text-anchor": "middle" }, String(z));
for (let i = 0; i <= 5; i++)
  add("text", { x: 98, y: Math.round(832 - i * 98.8), class: "scale", "text-anchor": "end" }, (i / 2).toFixed(2));

// Continues a run of three points by one more, keeping its curvature
const extend = (a, b, c) => [3 * a[0] - 3 * b[0] + c[0], 3 * a[1] - 3 * b[1] + c[1]];

// Smooth curve through one point per zone (Catmull-Rom)
function curve(color, ys, from) {
  const p = ys.map((y, z) => [X0 + 0.5 + 63.3 * z, y]);
  if (from) p[0] = from;
  const n = p.length;
  const first = from ? p[0] : extend(p[0], p[1], p[2]);
  const last = extend(p[n - 1], p[n - 2], p[n - 3]);
  let d = `M${p[0]}`;
  for (let i = 0; i < n - 1; i++) {
    const a = p[i - 1] || first, b = p[i], c = p[i + 1], e = p[i + 2] || last;
    d += `C${b[0] + (c[0] - a[0]) / 6} ${b[1] + (c[1] - a[1]) / 6} ${c[0] - (e[0] - b[0]) / 6} ${c[1] - (e[1] - b[1]) / 6} ${c}`;
  }
  add("path", { d, fill: "none", stroke: color, "stroke-width": 1.1 });
}
curve("#000", [826.7, 808, 779.7, 745, 703.3, 658.3, 612, 565.5, 521, 483.7, 450.7]);
curve("#000", [827, 808.5, 780.3, 745.3, 706, 663.3, 619, 576, 535, 497.3, 465]);
curve("#000", [828, 812.7, 791, 763, 729.3, 693.7, 655.3, 618, 581.3, 547.3, 515.7]);
curve("#000", [826, 811.7, 794, 772.7, 748.3, 721, 692.5, 662, 632, 601.7, 571]);
curve("#000", [0, 821.7, 808.3, 792, 773.3, 752.7, 731, 707.5, 683, 656, 629.3], [140, 828]);
curve("#00f", [824.7, 799.5, 760, 710.3, 652.7, 591.7, 532.7, 476.3, 429, 391, 368.3]);
curve("#f00", [828, 804.7, 766.7, 718.7, 662.3, 603.3, 545, 490, 443, 405.7, 383]);
curve("#008000", [820, 796.7, 761.3, 718.3, 669, 616, 562.3, 510.7, 463.3, 422.3, 390.7]);

add("path", { d: "M96 571.500H741", stroke: "#000", "stroke-width": 3, "stroke-dasharray": "12 9.100" });
for (const x of [487.5, 550.5, 613.5, 677.5, 740.5])
  add("circle", { cx: x, cy: 571.5, r: 5, fill: "none", stroke: "#000" });

// Callouts: text, box x, y, width, height, shaded, leader line
const callouts = [
  ["11 min, Dil A", 491, 467, 50, 13, 0, "517 481 525 500"],
  ["10 min, Dil A", 455, 495, 50, 14, 0, "499 510 507 528"],
  ["9 min Dil A, N+2", 391, 536, 66, 13, 1, "452 550 487 566"],
  ["11 min, N+1", 519, 537, 47, 12, 1, "544 550 548 567"],
  ["8.5 min, N", 611, 545, 41, 12, 1, "626 558 617 568"],
  ["7 min, N-1", 695, 545, 40, 12, 1, "695 555 681 568"],
  ["6 min, N-2", 703, 602, 42, 12, 1, "723 602 739 576"],
  ["12 min", 691, 428, 31, 12, 0, "706 441 717 462"],
  ["10 min", 690, 495, 31, 12, 0, "712 495 709 481"],
  ["8 min", 674, 515, 31, 12, 0, "685 528 691 541"],
  ["4 min", 694, 655, 31, 12, 0, "705 655 711 643"]
];
for (const [label, x, y, w, h, shaded, lead] of callouts) {
  add("path", { d: "M" + lead, stroke: "#000" });
  add("rect", { x: x + 0.5, y: y + 0.5, width: w, height: h, fill: shaded ? "#c0c0c0" : "#fff", stroke: "#000" });
  add("text", { x: x + 3, y: y + 10, class: "callout" }, label);
}
```
